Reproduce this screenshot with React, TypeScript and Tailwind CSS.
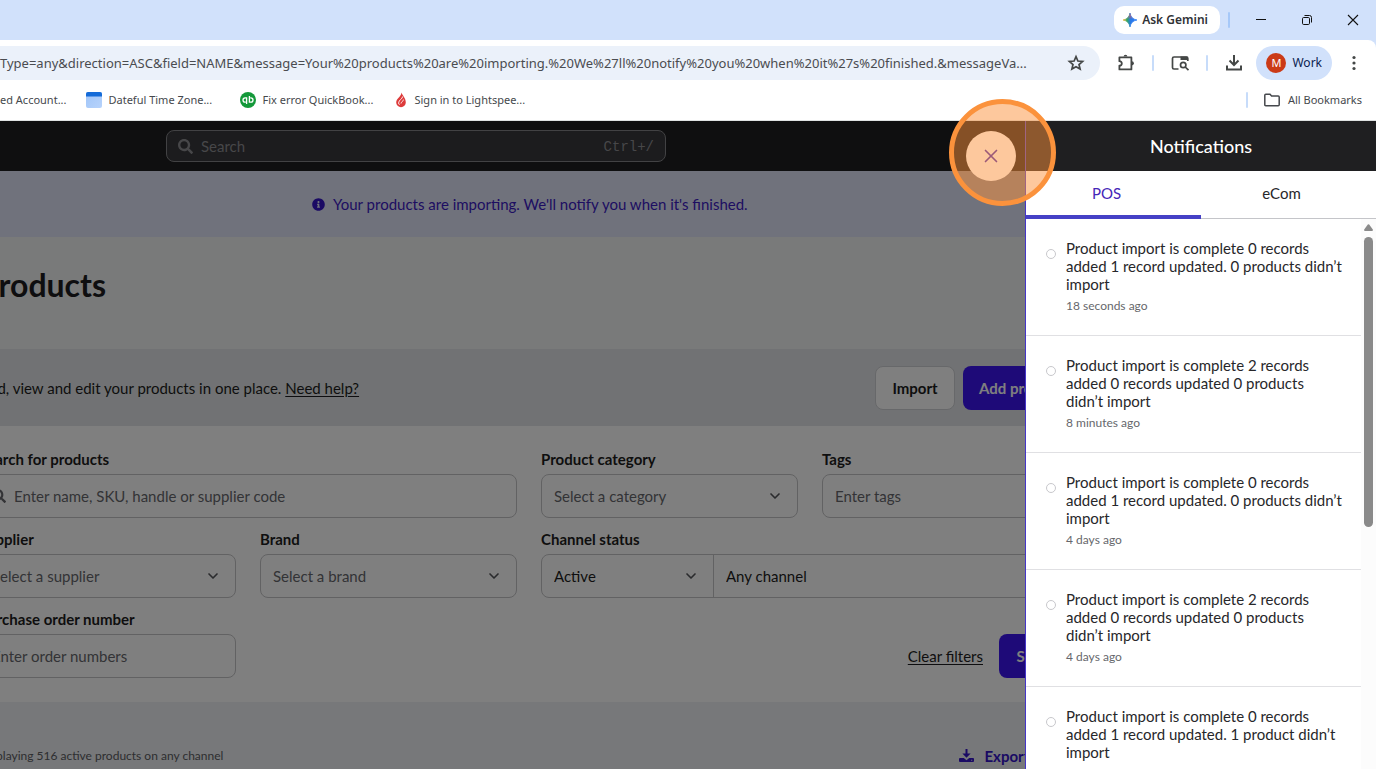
import type { ReactNode } from "react";
import { FaInfoCircle, FaSearch } from "react-icons/fa";
import { ChevronDown, X } from "lucide-react";

const url =
  "Type=any&direction=ASC&field=NAME&message=Your%20products%20are%20importing.%20We%27ll%20notify%20you%20when%20it%27s%20finished.&messageVa...";

const notifications = [
  { text: "Product import is complete 0 records added 1 record updated. 0 products didn’t import", time: "18 seconds ago" },
  { text: "Product import is complete 2 records added 0 records updated 0 products didn’t import", time: "8 minutes ago" },
  { text: "Product import is complete 0 records added 1 record updated. 0 products didn’t import", time: "4 days ago" },
  { text: "Product import is complete 2 records added 0 records updated 0 products didn’t import", time: "4 days ago" },
  { text: "Product import is complete 0 records added 1 record updated. 1 product didn’t import", time: "4 days ago" },
];

function Divider() {
  return <span className="h-4 w-0.5 shrink-0 rounded bg-[#c7dcfa]" />;
}

function TitleBar() {
  return (
    <div className="flex h-10 shrink-0 items-center justify-end bg-[#d1e1fb]">
      <button className="flex h-7 items-center gap-1 rounded-[10px] bg-white pr-3 pl-2 text-[12px] font-semibold text-[#303236]">
        <svg width="16" height="16" viewBox="0 0 16 16" aria-hidden="true">
          <defs>
            <linearGradient id="gem-x" x1="0" y1="0" x2="1" y2="0">
              <stop offset="0" stopColor="#f5b82e" />
              <stop offset="0.3" stopColor="#2fa56a" />
              <stop offset="0.55" stopColor="#2878ea" />
              <stop offset="1" stopColor="#2f80f5" />
            </linearGradient>
            <linearGradient id="gem-y" x1="0" y1="0" x2="0" y2="1">
              <stop offset="0" stopColor="#f0524b" />
              <stop offset="0.45" stopColor="#f0524b" stopOpacity="0" />
            </linearGradient>
          </defs>
          <path d="M8 1C8.8 5.2 10.8 7.2 15 8C10.8 8.8 8.8 10.8 8 15C7.2 10.8 5.2 8.8 1 8C5.2 7.2 7.2 5.2 8 1Z" fill="url(#gem-x)" stroke="url(#gem-x)" strokeWidth="0.8" />
          <path d="M8 1C8.8 5.2 10.8 7.2 15 8C10.8 8.8 8.8 10.8 8 15C7.2 10.8 5.2 8.8 1 8C5.2 7.2 7.2 5.2 8 1Z" fill="url(#gem-y)" />
        </svg>
        Ask Gemini
      </button>
      <span className="ml-2 h-4 w-0.5 rounded bg-[#a6c8f8]" />
      <div className="ml-2 flex h-10 text-[#111]">
        <button aria-label="Minimize" className="flex w-[46px] items-center justify-center">
          <svg width="12" height="12" viewBox="0 0 12 12" stroke="currentColor"><path d="M1 5.5H11" /></svg>
        </button>
        <button aria-label="Restore" className="flex w-[46px] items-center justify-center">
          <svg width="12" height="12" viewBox="0 0 12 12" fill="none" stroke="currentColor">
            <rect x="1.5" y="3.5" width="7" height="7" rx="1.2" />
            <path d="M3.5 1.5H8.5Q10.5 1.5 10.5 3.5V8.5" />
          </svg>
        </button>
        <button aria-label="Close window" className="flex w-[46px] items-center justify-center">
          <svg width="12" height="12" viewBox="0 0 12 12" stroke="currentColor" strokeWidth="1.1"><path d="M1 1L11 11M11 1L1 11" /></svg>
        </button>
      </div>
    </div>
  );
}

function AddressRow() {
  return (
    <div className="shrink-0 bg-[#d1e1fb]">
      <div className="flex h-[46px] items-center rounded-tr-lg bg-white pr-3 text-[#444746]">
        <div className="flex h-[34px] min-w-0 flex-1 items-center rounded-r-full bg-[#ebf1fa] pr-[14px]">
          <input
            aria-label="Address"
            readOnly
            value={url}
            className="min-w-0 flex-1 bg-transparent pt-0.5 text-[13px] text-[#4a4c50] outline-none"
          />
          <button aria-label="Bookmark this tab">
            <svg width="20" height="20" viewBox="0 0 20 20" fill="none" stroke="currentColor" strokeWidth="1.7" strokeLinejoin="miter">
              <path d="M10 3.6L11.9 8L16.6 8.4L13 11.5L14.1 16.1L10 13.7L5.9 16.1L7 11.5L3.4 8.4L8.1 8Z" />
            </svg>
          </button>
        </div>
        <div className="flex items-center pl-4">
          <button aria-label="Extensions">
            <svg width="20" height="20" viewBox="0 0 20 20" fill="none" stroke="currentColor" strokeWidth="1.8">
              <path d="M3.4 4.4H15.4V16.4H3.4V12.6C6.6 12.6 6.6 8.2 3.4 8.2Z" strokeLinejoin="round" />
              <path d="M7.6 3.6A1.9 1.9 0 0 1 11.4 3.6Z" fill="currentColor" stroke="none" />
              <path d="M15.8 8.2A2 2 0 0 1 15.8 12.4Z" fill="currentColor" stroke="none" />
            </svg>
          </button>
          <span className="mx-4 flex"><Divider /></span>
          <button aria-label="Search tabs">
            <svg width="20" height="20" viewBox="0 0 20 20" fill="none" stroke="currentColor" strokeWidth="1.7">
              <path d="M8.5 16H4Q2.5 16 2.5 14.5V5.5Q2.5 4 4 4H16.5Q17.8 4 17.8 5.5V8" />
              <path d="M10.5 3.5H17.5V7H10.5Z" fill="currentColor" stroke="none" />
              <circle cx="13.2" cy="12" r="2.7" />
              <path d="M15.2 14L18.5 17.2" />
            </svg>
          </button>
          <span className="mx-4 flex"><Divider /></span>
          <button aria-label="Downloads">
            <svg width="20" height="20" viewBox="0 0 20 20" fill="none" stroke="currentColor" strokeWidth="2">
              <path d="M10 2V11.5M5.5 7.5L10 12L14.5 7.5M3 12.5V16.5H17V12.5" />
            </svg>
          </button>
        </div>
        <button className="ml-3 flex h-[34px] items-center gap-1.5 rounded-full bg-[#d1e1fb] px-2.5 text-[12px] text-[#0b2250]">
          <span className="flex size-5 items-center justify-center rounded-full bg-[#cb3a17] text-[11px] text-white">M</span>
          Work
        </button>
        <button aria-label="Browser menu" className="ml-3">
          <svg width="20" height="20" viewBox="0 0 20 20" fill="currentColor">
            <circle cx="10" cy="4.5" r="1.6" /><circle cx="10" cy="10" r="1.6" /><circle cx="10" cy="15.5" r="1.6" />
          </svg>
        </button>
      </div>
    </div>
  );
}

function Bookmark({ icon, children }: { icon: ReactNode; children: ReactNode }) {
  return (
    <a href="#" className="flex shrink-0 items-center gap-1.5">
      {icon}
      <span className="min-w-28">{children}</span>
    </a>
  );
}

function BookmarkBar() {
  return (
    <nav className="flex h-[35px] shrink-0 items-center gap-5 border-b border-[#dfe2e2] bg-white pr-[14px] pb-1.5 text-[11px] text-[#45484c]">
      <a href="#" className="shrink-0">ed Account...</a>
      <Bookmark
        icon={
          <svg width="16" height="16" viewBox="0 0 16 16">
            <defs>
              <linearGradient id="cal" x1="0" y1="0" x2="1" y2="1">
                <stop offset="0" stopColor="#9fc4f8" /><stop offset="1" stopColor="#b7d3fb" />
              </linearGradient>
            </defs>
            <rect width="16" height="16" rx="2" fill="url(#cal)" />
            <path d="M0 4.5V2Q0 0 2 0H14Q16 0 16 2V4.5Z" fill="#146bd8" />
          </svg>
        }
      >
        Dateful Time Zone...
      </Bookmark>
      <Bookmark
        icon={
          <svg width="16" height="16" viewBox="0 0 16 16">
            <circle cx="8" cy="8" r="8" fill="#14993a" />
            <g fill="none" stroke="#fff" strokeWidth="1.3">
              <path d="M6.6 5.8H5.2A2.1 2.1 0 0 0 5.2 10.2H5.8M6.6 5.2V12" />
              <path d="M9.4 10.2H10.8A2.1 2.1 0 0 0 10.8 5.8H10.2M9.4 10.8V4" />
            </g>
          </svg>
        }
      >
        Fix error QuickBook...
      </Bookmark>
      <Bookmark
        icon={
          <svg width="14" height="16" viewBox="0 0 14 16">
            <path d="M7.5 0.5C8 3 11.8 6 11.8 10.4A4.8 4.8 0 0 1 2.2 10.4C2.2 8.4 3.4 7.3 4.6 5.8C5.8 4.2 7.2 3 7.5 0.5Z" fill="#dd3b3b" />
            <path d="M8.6 4.5C8.8 6.8 4.6 8 4.6 10.9Q4.6 12.2 5.6 12.8M9.4 7.6C9.6 9.4 7 9.6 7 11.5" fill="none" stroke="#fff" strokeWidth="0.9" />
          </svg>
        }
      >
        Sign in to Lightspee...
      </Bookmark>
      <div className="ml-auto flex items-center gap-4">
        <Divider />
        <button className="flex items-center gap-2">
          <svg width="16" height="14" viewBox="0 0 16 14" fill="none" stroke="currentColor" strokeWidth="1.5">
            <path d="M.8 2.2Q.8 1.2 1.8 1.2H6L7.6 3H14.2Q15.2 3 15.2 4V11.8Q15.2 12.8 14.2 12.8H1.8Q.8 12.8 .8 11.8Z" />
          </svg>
          All Bookmarks
        </button>
      </div>
    </nav>
  );
}

function Field({ id, label, className = "", children }: { id: string; label: string; className?: string; children: ReactNode }) {
  return (
    <div className={`flex min-w-0 flex-col gap-1.5 ${className}`}>
      <label htmlFor={id} className="text-[15px] leading-[18px] font-bold">{label}</label>
      <div className="flex h-11 items-center rounded-lg border border-[#c4c4c6]">{children}</div>
    </div>
  );
}

function Picker({ id, label, muted = true, ariaLabel }: { id?: string; label: string; muted?: boolean; ariaLabel?: string }) {
  return (
    <span className="flex h-full min-w-0 flex-1 items-center pr-[14px]">
      <select
        id={id}
        aria-label={ariaLabel}
        className={`h-full min-w-0 flex-1 appearance-none bg-transparent pl-3 outline-none ${muted ? "text-[#66676c]" : "text-[#1d1d20]"}`}
      >
        <option>{label}</option>
      </select>
      <ChevronDown className="pointer-events-none size-4 text-[#55565a]" strokeWidth={2.5} />
    </span>
  );
}

const inputClass = "h-full min-w-0 flex-1 bg-transparent px-3 text-[#1d1d20] outline-none placeholder:text-[#66676c]";

function ProductsPage() {
  return (
    <div className="h-full overflow-hidden bg-[#eef0f4] text-[15px] leading-5 text-[#1d1d20]">
      <header className="flex h-[50px] items-center bg-[#1f1f21]">
        <div className="ml-[166px] flex h-8 w-[500px] items-center rounded-lg border border-[#858588] bg-[#38383c] px-[11px] text-[#8e8e92]">
          <FaSearch className="size-[15px]" />
          <input aria-label="Search" placeholder="Search" className="ml-2 min-w-0 flex-1 bg-transparent outline-none placeholder:text-[#8e8e92]" />
          <kbd className="pt-0.5 font-[Liberation_Mono,monospace] text-[14px]">Ctrl+/</kbd>
        </div>
      </header>
      <p className="flex h-[66px] items-center gap-2 bg-[#e0e4f8] pl-[312px] text-[#3c1bc4]">
        <FaInfoCircle className="size-[13px] text-[#3515c8]" />
        Your products are importing. We'll notify you when it's finished.
      </p>
      <div className="bg-[#f2f4f5]">
        <div className="mr-[297px] -ml-[21px] flex h-28 items-start pt-8">
          <h1 className="text-[32px] leading-8 font-bold">Products</h1>
        </div>
      </div>
      <div className="bg-[#e2e5e8]">
        <div className="mr-[297px] -ml-[21px] flex h-[77px] items-center">
          <p className="flex-1">
            Add, view and edit your products in one place.{" "}
            <a href="#" className="underline underline-offset-2">Need help?</a>
          </p>
          <button className="h-11 w-20 rounded-lg border border-[#cfd0d4] bg-white font-bold">Import</button>
          <button className="ml-2 h-11 w-[116px] rounded-lg bg-[#3d15f0] px-4 text-left font-bold whitespace-nowrap text-white">Add product</button>
        </div>
      </div>
      <div className="bg-white">
        <form className="mr-[297px] -ml-[21px] grid grid-cols-4 gap-x-6 gap-y-3 py-6">
          <Field id="q" label="Search for products" className="col-span-2">
            <FaSearch className="ml-3 size-[14px] text-[#66676c]" />
            <input id="q" placeholder="Enter name, SKU, handle or supplier code" className="ml-2 h-full min-w-0 flex-1 bg-transparent outline-none placeholder:text-[#66676c]" />
          </Field>
          <Field id="category" label="Product category"><Picker id="category" label="Select a category" /></Field>
          <Field id="tags" label="Tags"><input id="tags" placeholder="Enter tags" className={inputClass} /></Field>
          <Field id="supplier" label="Supplier"><Picker id="supplier" label="Select a supplier" /></Field>
          <Field id="brand" label="Brand"><Picker id="brand" label="Select a brand" /></Field>
          <Field id="status" label="Channel status" className="col-span-2">
            <span className="flex h-full w-[172px] border-r border-[#c4c4c6]"><Picker id="status" label="Active" muted={false} /></span>
            <Picker label="Any channel" muted={false} ariaLabel="Channel" />
          </Field>
          <Field id="po" label="Purchase order number"><input id="po" placeholder="Enter order numbers" className={inputClass} /></Field>
          <div className="col-span-3 flex items-end justify-end gap-4">
            <button type="button" className="h-11 underline underline-offset-2">Clear filters</button>
            <button type="button" className="h-11 w-20 rounded-lg bg-[#3d15f0] font-bold text-white">Search</button>
          </div>
        </form>
      </div>
      <div className="mr-[297px] -ml-[21px] flex h-[107px] items-center justify-between">
        <p className="text-[12px] text-[#5c5d62]">Displaying 516 active products on any channel</p>
        <button className="flex items-center gap-2.5 font-bold whitespace-nowrap text-[#3515c8]">
          <svg width="15" height="14" viewBox="0 0 15 14" fill="currentColor">
            <path d="M6.5 0H8.5V4.4H11.6L7.5 8.8L3.4 4.4H6.5Z" />
            <path fillRule="evenodd" d="M1 9H4.8L7.5 11.2L10.2 9H14Q15 9 15 10V12Q15 13 14 13H1Q0 13 0 12V10Q0 9 1 9ZM12.2 10.8V11.8H13.2V10.8Z" />
          </svg>
          Export to CSV
        </button>
      </div>
    </div>
  );
}

function NotificationPanel() {
  return (
    <aside className="absolute inset-y-0 right-0 flex w-[351px] flex-col border-l border-[#4536c8] bg-white text-[15px] text-[#27272a]">
      <h2 className="flex h-[50px] shrink-0 items-center justify-center bg-[#1f1f21] text-[18px] font-medium text-white">Notifications</h2>
      <div role="tablist" className="flex h-12 shrink-0 text-[#27272a]">
        <button role="tab" aria-selected="true" className="flex-1 border-b-4 border-[#4541c6] pr-3.5 text-[#4526b8]">POS</button>
        <button role="tab" aria-selected="false" className="flex-1 border-b border-[#c4c5c9] pr-3.5 pb-[3px]">eCom</button>
      </div>
      <div className="flex min-h-0 flex-1">
        <ul className="min-w-0 flex-1 overflow-hidden">
          {notifications.map((item, index) => (
            <li key={index} className="flex gap-2.5 border-b border-[#e0e0e3] py-5 pr-[18px] pl-5">
              <span className="mt-2.5 size-2.5 shrink-0 rounded-full border border-[#c8c8cc]" />
              <div>
                <p className="leading-[18px]">{item.text}</p>
                <p className="mt-1 text-[12px] leading-[18px] text-[#66676c]">{item.time}</p>
              </div>
            </li>
          ))}
        </ul>
        <div className="flex w-[15px] flex-col items-center gap-1.5 bg-[#fcfcfc] pt-[5px]">
          <svg width="9" height="7" viewBox="0 0 9 7" fill="#8a8a8a"><path d="M3.8 .6Q4.5 -.2 5.2 .6L8.8 5.6Q9.2 7 8 7H1Q-.2 7 .2 5.6Z" /></svg>
          <span className="h-[290px] w-[9px] rounded-full bg-[#8a8a8a]" />
        </div>
      </div>
    </aside>
  );
}

export default function App() {
  return (
    <div className="flex h-screen flex-col overflow-hidden font-[Noto_Sans,Open_Sans,sans-serif]">
      <TitleBar />
      <AddressRow />
      <BookmarkBar />
      <main className="relative min-h-0 flex-1 font-[Lato,sans-serif]">
        <ProductsPage />
        <div className="absolute inset-0 bg-black/50" />
        <NotificationPanel />
        <button aria-label="Close notifications" className="absolute top-2.5 right-[360px] flex size-[50px] items-center justify-center rounded-full bg-white text-[#3a20b4]">
          <X className="size-[22px]" strokeWidth={1.8} />
        </button>
        <span className="pointer-events-none absolute -top-[22px] right-80 size-[107px] rounded-full border-[5px] border-[#fb923c] bg-[#fb923c]/50" />
      </main>
    </div>
  );
}
